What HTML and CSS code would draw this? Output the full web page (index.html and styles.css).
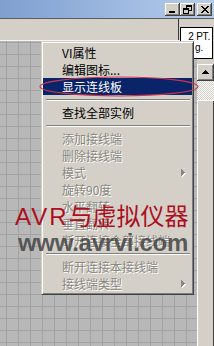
FILE: index.html
```html
<!DOCTYPE html>
<html>
<head>
<meta charset="utf-8">
<link rel="stylesheet" href="styles.css">
</head>
<body>
<div class="window">
  <div class="titlebar">
    <div class="cap-btn cap-min"><svg width="6" height="2" viewBox="0 0 6 2"><rect width="6" height="2" fill="#000"/></svg></div>
    <div class="cap-btn cap-restore"><svg width="9" height="9" viewBox="0 0 9 9" shape-rendering="crispEdges"><path fill="#000" d="M3 0h6v2H3z M8 2h1v4H8z M6 5h2v1H6z M3 2h1v1H3z M0 3h6v2H0z M0 5h1v4H0z M5 5h1v4H5z M1 8h4v1H1z"/></svg></div>
    <div class="cap-btn cap-close"><svg width="8" height="7" viewBox="0 0 8 7" shape-rendering="crispEdges"><path fill="#000" d="M0 0h2v1H0z M6 0h2v1H6z M1 1h2v1H1z M5 1h2v1H5z M2 2h4v1H2z M3 3h2v1H3z M2 4h4v1H2z M1 5h2v1H1z M5 5h2v1H5z M0 6h2v1H0z M6 6h2v1H6z"/></svg></div>
  </div>
  <div class="toolbar">
    <div class="tool-left"></div>
    <div class="tool-right"></div>
  </div>
  <div class="main">
    <div class="canvas"></div>
    <div class="vscroll">
      <div class="vs-top"></div>
      <div class="vs-btn"><svg width="7" height="4" viewBox="0 0 7 4" shape-rendering="crispEdges"><path fill="#000" d="M3 0h1v1H3z M2 1h3v1H2z M1 2h5v1H1z M0 3h7v1H0z"/></svg></div>
      <div class="vs-track"></div>
      <div class="vs-thumb"></div>
    </div>
  </div>

  <div class="vi-icon">
    <div class="vi-line1">2 PT.</div>
    <div class="vi-line2">g.</div>
  </div>

  <div class="menu">
    <div class="item"><span class="label">VI属性</span></div>
    <div class="item"><span class="label">编辑图标...</span></div>
    <div class="item sel"><span class="label">显示连线板</span></div>
    <div class="sep"></div>
    <div class="item"><span class="label">查找全部实例</span></div>
    <div class="sep"></div>
    <div class="item dis"><span class="label">添加接线端</span></div>
    <div class="item dis"><span class="label">删除接线端</span></div>
    <div class="item dis"><span class="label">模式</span><svg class="arrow" width="5" height="8" viewBox="0 0 5 8" shape-rendering="crispEdges"><path fill="#fff" d="M1 1h1v7H1z M2 2h1v5H2z M3 3h1v3H3z M4 4h1v1H4z"/><path fill="#8a8780" d="M0 0h1v7H0z M1 1h1v5H1z M2 2h1v3H2z M3 3h1v1H3z"/></svg></div>
    <div class="item dis"><span class="label">旋转90度</span></div>
    <div class="item dis"><span class="label">水平翻转</span></div>
    <div class="item dis"><span class="label">垂直翻转</span></div>
    <div class="item dis"><span class="label">断开连接全部接线端</span></div>
    <div class="sep"></div>
    <div class="item dis"><span class="label">断开连接本接线端</span></div>
    <div class="item dis"><span class="label">接线端类型</span><svg class="arrow" width="5" height="8" viewBox="0 0 5 8" shape-rendering="crispEdges"><path fill="#fff" d="M1 1h1v7H1z M2 2h1v5H2z M3 3h1v3H3z M4 4h1v1H4z"/><path fill="#8a8780" d="M0 0h1v7H0z M1 1h1v5H1z M2 2h1v3H2z M3 3h1v1H3z"/></svg></div>
  </div>

  <svg class="ring" width="164" height="24" viewBox="0 0 164 24"><ellipse cx="81" cy="11.5" rx="79" ry="9.5" fill="none" stroke="#c8344e" stroke-width="1.2"/></svg>

  <div class="watermark">
    <div class="wm-title"><span class="wm-latin">AVR</span><span class="wm-cjk">与虚拟仪器</span></div>
    <div class="wm-url">www.avrvi.com</div>
  </div>
</div>
</body>
</html>
```
FILE: styles.css
```css
html, body {
  margin: 0;
  padding: 0;
}
body {
  width: 214px;
  height: 346px;
  overflow: hidden;
  background: #d4d0c8;
  font-family: "Noto Sans CJK SC", "Liberation Sans", sans-serif;
}
.window {
  position: relative;
  width: 214px;
  height: 346px;
  display: flex;
  flex-direction: column;
}
.titlebar {
  height: 18px;
  flex: none;
  background: linear-gradient(to right, #7f9fd0, #a0bbe2 60%, #b6cde9);
  display: flex;
  justify-content: flex-end;
  align-items: flex-start;
  padding-right: 2px;
  box-sizing: border-box;
  padding-top: 3px;
}
.cap-btn {
  width: 15px;
  height: 13px;
  background: #d4d0c8;
  box-shadow: inset -1px -1px #404040, inset 1px 1px #fff, inset -2px -2px #808080;
  display: flex;
  align-items: center;
  justify-content: center;
}
.cap-btn svg { display: block; }
.cap-min { align-items: flex-end; padding-bottom: 3px; box-sizing: border-box; justify-content: flex-start; padding-left: 4px; }
.cap-restore { margin-right: 2px; }
.toolbar {
  height: 23px;
  flex: none;
  box-sizing: border-box;
  border-top: 1px solid #5c5c5c;
  border-bottom: 1px solid #f4f4f4;
  background: #d4d0c8;
  display: flex;
}
.tool-left { width: 178px; }
.tool-right { flex: 1; border-left: 1px solid #3a3a3a; }
.main {
  flex: 1;
  display: flex;
  min-height: 0;
}
.canvas {
  flex: 1;
  background-color: #b8b8b8;
  background-image:
    linear-gradient(#a2a2a2 1px, transparent 1px),
    linear-gradient(90deg, #a2a2a2 1px, transparent 1px);
  background-size: 12px 12px;
  background-position: 6px 1px;
}
.vscroll {
  width: 17px;
  display: flex;
  flex-direction: column;
  background: #d4d0c8;
}
.vs-top { height: 23px; flex: none; }
.vs-btn {
  height: 17px;
  flex: none;
  box-sizing: border-box;
  background: #d4d0c8;
  box-shadow: inset -1px -1px #404040, inset 1px 1px #fff, inset -2px -2px #808080;
  display: flex;
  align-items: center;
  justify-content: center;
}
.vs-btn svg { display: block; margin-bottom: 1px; }
.vs-track {
  height: 19px;
  flex: none;
  background: repeating-conic-gradient(#ffffff 0 25%, #d4d0c8 0 50%) 0 0 / 2px 2px;
}
.vs-thumb {
  flex: 1;
  background: #d4d0c8;
  box-shadow: inset 1px 1px #fff, inset -1px 0 #404040;
}

.vi-icon {
  position: absolute;
  left: 180px;
  top: 27px;
  width: 33px;
  height: 32px;
  box-sizing: border-box;
  border: 1px solid #000;
  background: #fff;
  font-family: "Liberation Sans", Arial, sans-serif;
  font-size: 10px;
  line-height: 11px;
  color: #000;
}
.vi-line1 { text-align: right; padding-right: 2px; padding-top: 3px; letter-spacing: -0.2px; }
.vi-line2 { padding-left: 14px; }

.menu {
  position: absolute;
  left: 41px;
  top: 41px;
  width: 153px;
  box-sizing: border-box;
  background: #d4d0c8;
  border: 1px solid;
  border-color: #d4d0c8 #404040 #404040 #d4d0c8;
  box-shadow: inset 1px 1px #fff, inset -1px -1px #808080;
  padding: 2px 1px 2px 1px;
  font-size: 12px;
  color: #000;
}
.item {
  height: 17px;
  line-height: 17px;
  display: flex;
  align-items: center;
  padding: 0 6px 0 19px;
  white-space: nowrap;
}
.item .label { flex: 1; }
.item .arrow { display: block; flex: none; }
.item.sel {
  background: #0a246a;
  color: #fff;
}
.item.dis {
  color: #8a8780;
  text-shadow: 1px 1px 0 #fff;
}
.sep {
  height: 0;
  margin: 4px 2px 3px 3px;
  border-top: 1px solid #808080;
  border-bottom: 1px solid #fff;
}

.ring {
  position: absolute;
  left: 38px;
  top: 75px;
}

.watermark {
  position: absolute;
  left: 15px;
  top: 202px;
  display: flex;
  flex-direction: column;
  pointer-events: none;
}
.wm-title {
  font-size: 24px;
  line-height: 26px;
  color: #ad0f1e;
  white-space: nowrap;
}
.wm-latin {
  font-family: "Liberation Sans", Arial, sans-serif;
  font-size: 24px;
  letter-spacing: 2px;
}
.wm-cjk {
  font-family: "Noto Sans CJK SC", sans-serif;
  letter-spacing: 0;
}
.wm-url {
  font-family: "Liberation Sans", Arial, sans-serif;
  font-weight: bold;
  font-size: 24px;
  line-height: 26px;
  letter-spacing: -0.3px;
  color: rgba(72, 72, 72, 0.88);
  white-space: nowrap;
  margin-left: 3px;
}
```
